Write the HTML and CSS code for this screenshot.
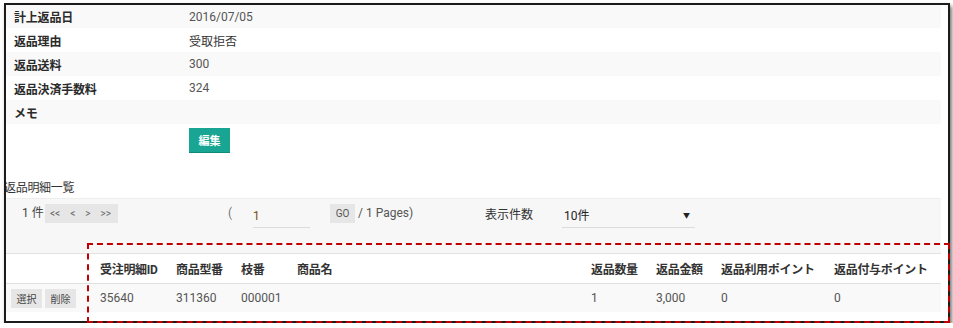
FILE: index.html
```html
<!DOCTYPE html>
<html lang="ja">
<head>
<meta charset="utf-8">
<link rel="stylesheet" href="styles.css">
</head>
<body>
<div class="shot">
  <div class="frame">
    <div class="details">
      <div class="drow shade"><div class="lbl">計上返品日</div><div class="val num">2016/07/05</div></div>
      <div class="drow"><div class="lbl">返品理由</div><div class="val dark">受取拒否</div></div>
      <div class="drow shade"><div class="lbl">返品送料</div><div class="val num">300</div></div>
      <div class="drow"><div class="lbl">返品決済手数料</div><div class="val num">324</div></div>
      <div class="drow shade"><div class="lbl">メモ</div><div class="val"></div></div>
      <div class="editrow"><button class="edit">編集</button></div>
    </div>
    <div class="listtitle">返品明細一覧</div>
    <div class="pager">
      <div class="count">1 件</div>
      <div class="nav"><span>&lt;&lt;</span><span>&lt;</span><span>&gt;</span><span>&gt;&gt;</span></div>
      <div class="paren">(</div>
      <div class="pageinput">1</div>
      <div class="go">GO</div>
      <div class="pages">/ 1 Pages)</div>
      <div class="perlabel">表示件数</div>
      <div class="select"><span>10件</span><span class="arrow">▼</span></div>
    </div>
    <div class="table">
      <div class="trow head">
        <div class="c c0"></div>
        <div class="c c1">受注明細ID</div>
        <div class="c c2">商品型番</div>
        <div class="c c3">枝番</div>
        <div class="c c4">商品名</div>
        <div class="c c5">返品数量</div>
        <div class="c c6">返品金額</div>
        <div class="c c7">返品利用ポイント</div>
        <div class="c c8">返品付与ポイント</div>
      </div>
      <div class="trow body">
        <div class="c c0 btns"><span class="sbtn">選択</span><span class="sbtn">削除</span></div>
        <div class="c c1">35640</div>
        <div class="c c2">311360</div>
        <div class="c c3">000001</div>
        <div class="c c4"></div>
        <div class="c c5">1</div>
        <div class="c c6">3,000</div>
        <div class="c c7">0</div>
        <div class="c c8">0</div>
      </div>
    </div>
  </div>
  <div class="highlight"></div>
</div>
</body>
</html>
```

FILE: styles.css
```css
html, body {
  margin: 0;
  padding: 0;
  background: #ffffff;
}
body {
  font-family: "Roboto", "Noto Sans CJK JP", sans-serif;
  font-size: 12px;
  color: #333;
}
.shot {
  position: relative;
  margin: 3px 0 0 4px;
  width: 946px;
  height: 320px;
}
.frame {
  box-sizing: border-box;
  width: 946px;
  height: 320px;
  border: 2px solid #1c1c1c;
  box-shadow: 2px 3px 4px rgba(0, 0, 0, 0.55);
  overflow: hidden;
  padding-right: 7px;
  background: #fff;
}
.details .drow {
  display: flex;
  align-items: center;
  height: 24px;
}
.details .drow:first-child {
  height: 23px;
}
.shade {
  background: #f9f9f9;
}
.lbl {
  width: 183px;
  padding-left: 8px;
  box-sizing: border-box;
  font-family: "Noto Sans CJK JP", sans-serif;
  font-weight: 700;
  color: #2b2b2b;
  letter-spacing: -0.2px;
}
.val {
  color: #555;
}
.val.dark {
  color: #333;
  font-family: "Noto Sans CJK JP", sans-serif;
}
.editrow {
  padding: 4px 0 0 183px;
  height: 25px;
}
.edit {
  display: block;
  width: 41px;
  height: 25px;
  border: 0;
  border-bottom: 1px solid #0f8a7b;
  background: #19a593;
  color: #fff;
  font-family: "Noto Sans CJK JP", sans-serif;
  font-size: 11px;
  font-weight: 700;
  padding: 0;
}
.listtitle {
  margin-top: 25px;
  height: 20px;
  line-height: 18px;
  margin-left: -2px;
  font-family: "Noto Sans CJK JP", sans-serif;
  color: #333;
  letter-spacing: -0.3px;
}
.pager {
  display: flex;
  align-items: flex-start;
  height: 55px;
  border-top: 1px solid #eeeeee;
  background: #f7f7f7;
  padding: 5px 0 0 16px;
  box-sizing: border-box;
  color: #444;
}
.count {
  width: 23px;
  height: 19px;
  line-height: 19px;
  font-size: 12px;
}
.nav {
  display: flex;
  align-items: center;
  width: 73px;
  height: 19px;
  background: #e6e6e6;
  font-size: 10px;
  color: #666;
  padding-left: 5px;
  box-sizing: border-box;
  gap: 10px;
}
.paren {
  margin-left: 110px;
  width: 25px;
  height: 19px;
  line-height: 19px;
  color: #777;
}
.pageinput {
  width: 57px;
  height: 24px;
  line-height: 22px;
  border-bottom: 1px solid #dcdcdc;
  color: #7a4a20;
  box-sizing: border-box;
  padding-top: 1px;
  margin-right: 20px;
}
.go {
  width: 25px;
  height: 19px;
  line-height: 19px;
  background: #e6e6e6;
  text-align: center;
  font-size: 10px;
  color: #555;
  margin-right: 3px;
}
.pages {
  width: 127px;
  height: 19px;
  line-height: 19px;
  color: #555;
}
.perlabel {
  width: 77px;
  height: 19px;
  line-height: 19px;
  font-family: "Noto Sans CJK JP", sans-serif;
  color: #333;
}
.select {
  display: flex;
  justify-content: space-between;
  width: 133px;
  height: 24px;
  line-height: 23px;
  border-bottom: 1px solid #dcdcdc;
  box-sizing: border-box;
  padding: 1px 0 0 2px;
  color: #222;
  font-family: "Roboto", "Noto Sans CJK JP", sans-serif;
}
.arrow {
  font-size: 7px;
  margin-right: 5px;
  color: #222;
}
.table {
  border-top: 1px solid #e2e2e2;
}
.trow {
  display: flex;
  align-items: center;
}
.trow.head {
  height: 29px;
  border-bottom: 1px solid #e0e0e0;
  font-family: "Roboto", "Noto Sans CJK JP", sans-serif;
  font-weight: 700;
  color: #333;
}
.trow.head .c {
  letter-spacing: -0.3px;
}
.trow.body {
  height: 28px;
  background: #f9f9f9;
  color: #555;
}
.c {
  box-sizing: border-box;
  padding-left: 12px;
  white-space: nowrap;
}
.c0 { width: 82px; padding-left: 5px; }
.c1 { width: 76px; }
.c2 { width: 65px; }
.c3 { width: 56px; }
.c4 { width: 294px; }
.c5 { width: 65px; }
.c6 { width: 65px; }
.c7 { width: 113px; }
.c8 { width: 119px; }
.btns {
  display: flex;
  gap: 3px;
}
.sbtn {
  display: block;
  width: 31px;
  height: 19px;
  line-height: 19px;
  text-align: center;
  background: #e6e6e6;
  font-family: "Noto Sans CJK JP", sans-serif;
  font-size: 10px;
  color: #444;
}
.highlight {
  position: absolute;
  left: 83px;
  top: 240px;
  width: 863px;
  height: 80px;
  box-sizing: border-box;
  border: 2px dashed #c00000;
}
```
